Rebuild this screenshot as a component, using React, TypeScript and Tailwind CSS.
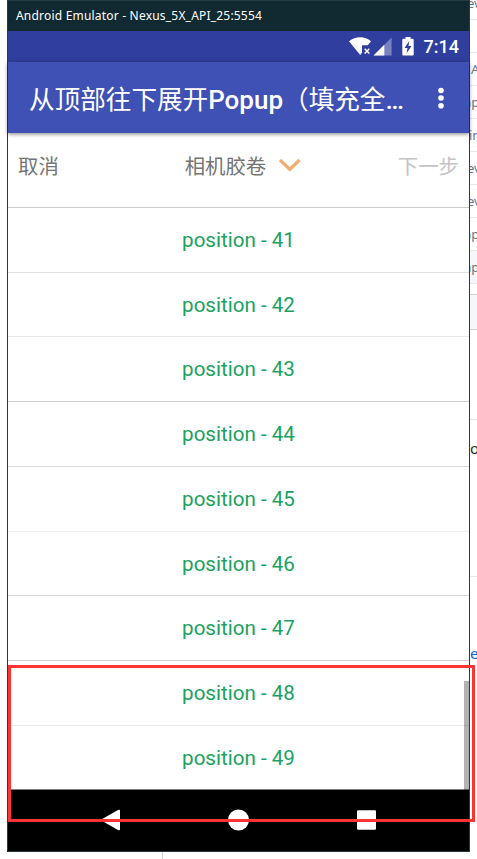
const rows = [
  { n: 41, cls: 'h-[65px] border-[#e0e0e0]' },
  { n: 42, cls: 'h-16 border-[#e6e6e6]' },
  { n: 43, cls: 'h-[65px] border-[#cfcfcf]' },
  { n: 44, cls: 'h-[65px] border-[#d8d8d8]' },
  { n: 45, cls: 'h-[65px] border-[#eeeeee]' },
  { n: 46, cls: 'h-16 border-[#dadada]' },
  { n: 47, cls: 'h-[65px] border-[#d0d0d0]' },
  { n: 48, cls: 'h-[65px] border-[#e8e8e8]' },
  { n: 49, cls: 'h-16 border-[#808080]' },
];

const files = [
  { text: 'ev', cls: '', shift: '-ml-[3px]' },
  { text: '', cls: '', shift: '' },
  { text: 'A', cls: '', shift: 'ml-px' },
  { text: 'ap', cls: '', shift: '-ml-[6px]' },
  { text: 'in', cls: '', shift: '-ml-px' },
  { text: 'ev', cls: '', shift: '-ml-[3px]' },
  { text: 'ev', cls: '', shift: '-ml-[3px]' },
  { text: 'ap', cls: '', shift: '-ml-[6px]' },
  { text: 'ap', cls: 'bg-[#f6f7fa]', shift: '-ml-[6px]' },
];

function StatusIcons() {
  return (
    <svg className="h-[31px] w-[70px] shrink-0" viewBox="0 0 70 31" fill="#fff">
      <path d="M0 10.2C6.5 5 16 5 22 10.2L18.8 14.2H13V21.5L11.2 24Z" />
      <path d="m15.7 17.8 4.6 4.8m0-4.8-4.6 4.8" stroke="#fff" strokeWidth="1.5" />
      <path d="M42.6 6.5v18H24.6Z" opacity=".35" />
      <path d="M35.3 13.8v10.7H24.6Z" />
      <path d="M56.6 6h5v1.8h2.1q1 0 1 1v14.7q0 1-1 1h-9.4q-1 0-1-1V8.8q0-1 1-1h2.3Z" />
      <path d="m60.3 10-4.8 7h3l-.9 5.2 4.9-7.2h-3Z" fill="#303f9f" />
    </svg>
  );
}

function Phone() {
  return (
    <main className="flex h-[852px] w-[463px] shrink-0 flex-col border-x border-b border-[#263b42] bg-white">
      <div className="flex h-[31px] shrink-0 items-center border-t border-[#263b42] bg-[#112a32] pl-2 font-['Noto_Sans',sans-serif] text-[12px] tracking-[0.2px] text-white">
        Android Emulator - Nexus_5X_API_25:5554
      </div>
      <div className="flex h-[31px] shrink-0 items-center justify-end bg-[#303f9f] pr-[10px] text-white">
        <StatusIcons />
        <span className="ml-[5px] pt-px text-right text-[18px] font-medium leading-none">7:14</span>
      </div>
      <header className="z-10 flex h-[71px] shrink-0 items-center bg-[#3f51b5] pl-[21px] text-white shadow-[0_1px_4px_rgba(0,0,0,0.5)]">
        <h1 className="w-[396px] whitespace-nowrap pt-[5px] text-[25.6px] font-normal leading-none">
          从顶部往下展开<span className="text-[26px] font-medium">Popup</span>（填充全<span className="text-[26px] font-medium">…</span>
        </h1>
        <svg className="ml-[12px] h-6 w-2 shrink-0" viewBox="0 0 8 24" fill="#fff">
          <circle cx="4" cy="4.5" r="2.8" />
          <circle cx="4" cy="12" r="2.8" />
          <circle cx="4" cy="19.8" r="2.8" />
        </svg>
      </header>
      <div className="flex h-[75px] shrink-0 justify-between border-b border-[#cccccc] pl-[10px] pr-[10px] pt-[23px] text-[20.4px] leading-[22px] text-[#757575]">
        <span className="w-[61px]">取消</span>
        <div className="flex pl-[10px]">
          相机胶卷
          <svg className="ml-[12px] mt-px h-4 w-6" viewBox="0 0 24 16" fill="none" stroke="#edb070" strokeWidth="3.4">
            <path d="m2 3 9.8 9.5L21.5 3" />
          </svg>
        </div>
        <span className="text-[#c4c4c4]">下一步</span>
      </div>
      <ul className="relative shrink-0">
        {rows.map((r) => (
          <li key={r.n} className={`flex items-center justify-center border-b pt-px text-[20.6px] text-[#1ba260] ${r.cls}`}>
            position - {r.n}
          </li>
        ))}
        <li className="absolute bottom-0 right-0 h-[109px] w-[5px] bg-black/30" />
      </ul>
      <nav className="flex grow items-center justify-center bg-black pb-[2px]">
        <svg className="h-6 w-[276px]" viewBox="0 0 276 24" fill="#fff">
          <path d="m1.2 11 15.8-9q2-1 2 1v18q0 2-2 1L1.2 13q-1.4-1 0-2Z" />
          <circle cx="137.5" cy="12" r="10.5" />
          <rect x="256" y="2.3" width="19" height="19.5" rx="1.2" />
        </svg>
      </nav>
    </main>
  );
}

function Background() {
  return (
    <aside className="flex h-[859px] w-[7px] shrink-0 flex-col overflow-hidden whitespace-nowrap font-['Noto_Sans',sans-serif] text-[13px] text-[#65758a]">
      <div className="-mt-[13px] flex shrink-0 flex-col">
        {files.map((f, i) => (
          <div key={i} className={`flex h-[33px] shrink-0 items-center border-b border-[#e6e8ec] pt-[2px] ${f.cls}`}>
            <span className={f.shift}>{f.text}</span>
          </div>
        ))}
      </div>
      <div className="mt-[10px] h-9 shrink-0 border-y border-[#d0d2d6] bg-[#f6f7fa]" />
      <div className="h-[90px] shrink-0 border-b border-[#e6e6ea]" />
      <div className="h-[157px] shrink-0 border-b border-[#e6e6ea] pt-[17px] text-[15px] text-[#24292e]">o</div>
      <div className="pt-[65px] text-[15px] text-[#1060d0]">e</div>
    </aside>
  );
}

export default function App() {
  return (
    <div className="relative flex h-[859px] w-[477px] overflow-hidden bg-white pl-[7px] font-[Roboto,'Noto_Sans_CJK_SC',sans-serif]">
      <Phone />
      <Background />
      <div className="absolute left-[162px] top-[852px] h-[7px] w-px bg-[#d0d0d8]" />
      <div className="absolute left-2 top-[665px] z-20 h-[157px] w-[467px] border-[3px] border-[#fd3434]" />
    </div>
  );
}
